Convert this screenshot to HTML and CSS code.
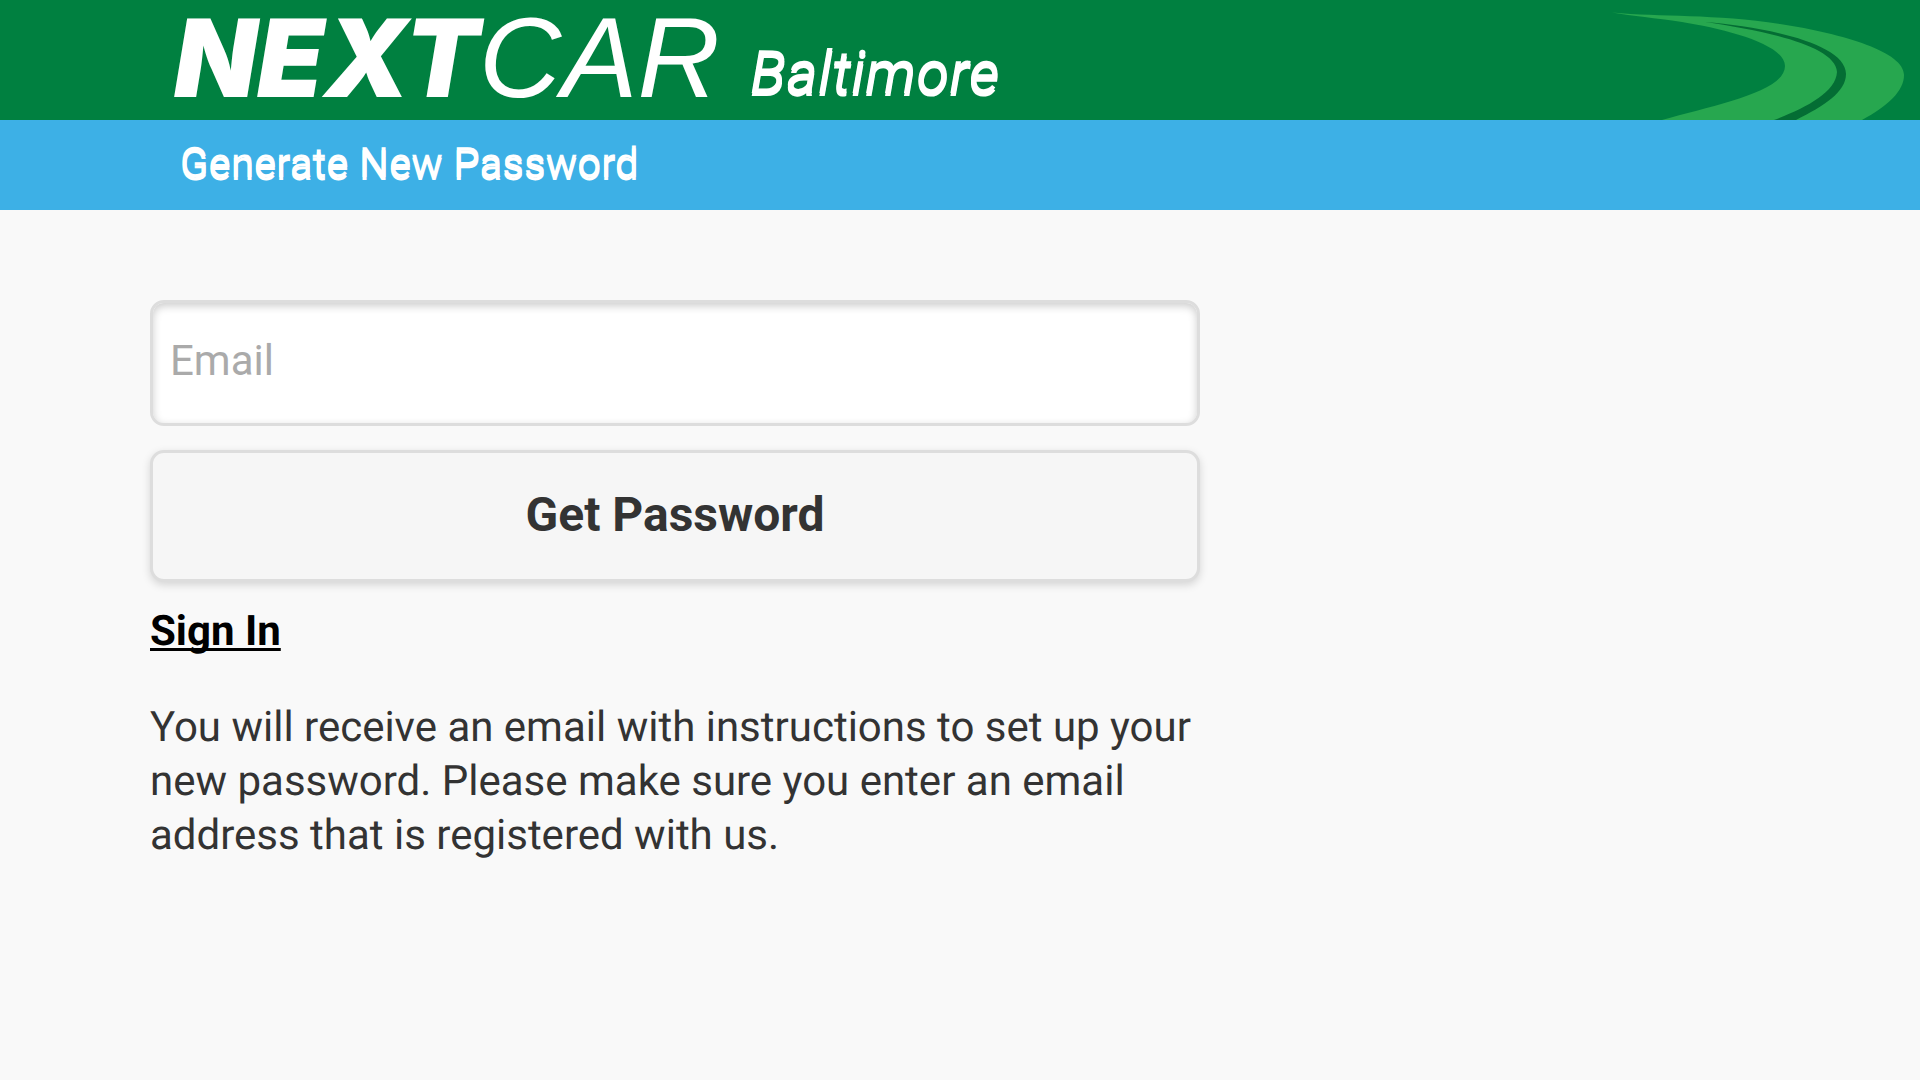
FILE: index.html
```html
<!DOCTYPE html>
<html lang="en">
<head>
<meta charset="utf-8">
<meta name="viewport" content="width=device-width, initial-scale=1">
<title>NextCar Baltimore - Generate New Password</title>
<link rel="stylesheet" href="styles.css">
</head>
<body>
<header class="banner">
  <div class="brand">
    <span class="logo"><span class="logo-next">NEXT</span><span class="logo-car">CAR</span></span>
    <span class="city">Baltimore</span>
  </div>
  <svg class="road" viewBox="0 0 330 120" aria-hidden="true">
    <path fill="#27a74f" d="M22 12.500C70 17 125 14 190 24C255 34 314 52 314 75C314 91 298 106 272 120H72C125 105 195 92 195 66C195 44 135 29 92 22C65 18 43 16 22 12.500Z"/>
    <path fill="#046d34" d="M115 22C175 27 256 43 256 74C256 92 234 106 206 120H184C216 108 246 92 247 72C246 45 170 30 115 22Z"/>
  </svg>
</header>
<div class="title-bar"><h1 class="title">Generate New Password</h1></div>
<main class="content">
  <form class="form">
    <input class="field" type="email" placeholder="Email" aria-label="Email">
    <button class="button" type="submit">Get Password</button>
  </form>
  <a class="sign-in" href="#">Sign In</a>
  <p class="help">You will receive an email with instructions to set up your new password. Please make sure you enter an email address that is registered with us.</p>
</main>
</body>
</html>
```
FILE: styles.css
```css
* { box-sizing: border-box; }
body {
  margin: 0;
  background: #f9f9f9;
  color: #333;
  font: 42px/54px Roboto, sans-serif;
  text-rendering: geometricPrecision;
}
.banner {
  display: flex;
  justify-content: space-between;
  height: 120px;
  padding-left: 174px;
  background: #008040;
}
.brand {
  display: flex;
  gap: 20px;
  color: #fff;
  white-space: nowrap;
}
.logo {
  min-width: 556px;
  font-family: Inter, sans-serif;
  font-size: 108px;
  font-style: italic;
  line-height: 118px;
}
.logo-next { font-weight: 900; }
.logo-car {
  font-family: "Liberation Sans", sans-serif;
  font-size: 114px;
  font-weight: 400;
  line-height: 1;
}
.city {
  padding-top: 25px;
  font-size: 60px;
  font-style: italic;
  line-height: 95px;
  text-shadow: 0 3px 0 #fff;
}
.road {
  flex: none;
  width: 330px;
  height: 120px;
}
.title-bar {
  padding: 17px 180px 19px;
  background: #3db0e6;
}
.title {
  margin: 0;
  color: #fff;
  font-size: 42px;
  font-weight: 400;
  line-height: 54px;
  text-shadow: 0 3px 0 #fff;
}
.content {
  max-width: 1200px;
  padding: 90px 0 90px 150px;
}
.form {
  display: flex;
  flex-direction: column;
  gap: 24px;
}
.field,
.button {
  width: 100%;
  border: 3px solid #ddd;
  border-radius: 14px;
  font-family: inherit;
}
.field {
  padding: 31px 17px 35px;
  background: #fff;
  color: #333;
  font-size: 42px;
  line-height: 54px;
  box-shadow: inset 0 3px 9px rgba(0, 0, 0, .2);
}
.field::placeholder {
  color: #aaa;
  opacity: 1;
}
.button {
  padding: 35px 18px 37px;
  background: #f6f6f6;
  color: #333;
  font-size: 48px;
  font-weight: 700;
  line-height: 54px;
  box-shadow: 0 3px 9px rgba(0, 0, 0, .15);
}
.sign-in {
  display: block;
  width: fit-content;
  margin-top: 23px;
  color: #000;
  font-weight: 700;
  text-decoration-skip-ink: none;
  text-decoration-thickness: 3px;
  text-underline-offset: 3px;
}
.help { margin: 42px 0 0; }
```
